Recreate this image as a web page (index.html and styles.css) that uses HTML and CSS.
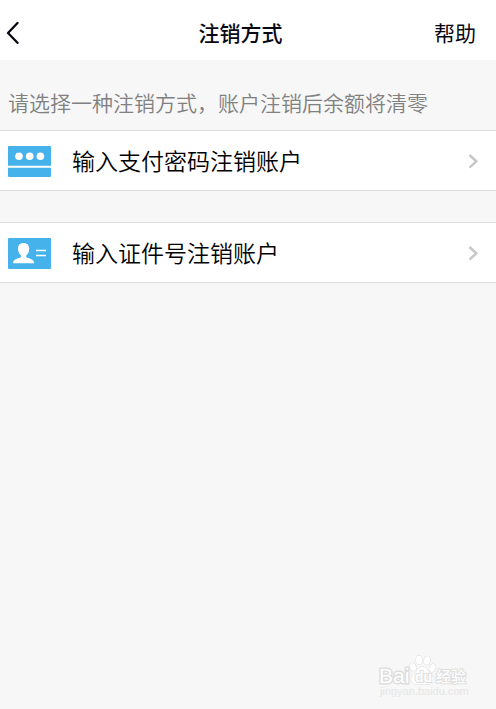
FILE: index.html
```html
<!DOCTYPE html>
<html lang="zh-CN">
<head>
<meta charset="utf-8">
<meta name="viewport" content="width=device-width, initial-scale=1">
<title>注销方式</title>
<link rel="stylesheet" href="styles.css">
</head>
<body>
<header class="bar">
  <button class="back" type="button" aria-label="返回">
    <svg width="14" height="24" viewBox="0 0 14 24"><path d="M12.500 3 3 13 12.500 22.800" fill="none" stroke="currentColor" stroke-width="2.300" stroke-linecap="round" stroke-linejoin="round"/></svg>
  </button>
  <h1 class="title">注销方式</h1>
  <a class="help" href="#help">帮助</a>
</header>
<main class="content">
  <p class="hint">请选择一种注销方式，账户注销后余额将清零</p>
  <nav class="options">
    <a class="option" href="#password">
      <svg class="icon" width="43" height="31" viewBox="0 0 43 31">
        <path d="M1 0H42Q43 0 43 1V19.700H0V1Q0 0 1 0ZM0 21.700H43V30Q43 31 42 31H1Q0 31 0 30Z" fill="#46b2eb"/>
        <g fill="#fff"><circle cx="11" cy="10.300" r="3.800"/><circle cx="21.700" cy="10.300" r="3.800"/><circle cx="32.400" cy="10.300" r="3.800"/></g>
      </svg>
      <span class="label">输入支付密码注销账户</span>
      <svg class="arrow" width="12" height="16" viewBox="0 0 12 16"><path d="M1.500 1 8.300 7.300 1.500 13.600" fill="none" stroke="currentColor" stroke-width="2.500"/></svg>
    </a>
    <a class="option" href="#identity">
      <svg class="icon" width="43" height="31" viewBox="0 0 43 31">
        <rect width="43" height="31" rx="1" fill="#46b2eb"/>
        <path d="M15.500 5C11.800 5 10 7.400 10 10.500C10 13.800 11.300 16 13 17.500V19C11.500 20.400 5 20.600 5 25.300H26.200C26.200 20.600 19.700 20.400 18.200 19V17.500C20 16 21.200 13.800 21.200 10.500C21.200 7.400 19.300 5 15.500 5Z" fill="#fff"/>
        <path d="M28 12.500H38M28 17.500H38" stroke="#fff" stroke-width="1.300"/>
      </svg>
      <span class="label">输入证件号注销账户</span>
      <svg class="arrow" width="12" height="16" viewBox="0 0 12 16"><path d="M1.500 1 8.300 7.300 1.500 13.600" fill="none" stroke="currentColor" stroke-width="2.500"/></svg>
    </a>
  </nav>
</main>
<footer class="footer">
  <svg class="mark" width="92" height="46" viewBox="0 0 92 46" role="img" aria-label="Baidu 经验">
    <g class="outline">
      <text class="latin" x="0" y="28">Bai</text>
      <ellipse cx="34" cy="12" rx="3" ry="4" transform="rotate(-20 34 12)"/>
      <ellipse cx="40" cy="5" rx="3" ry="4.300"/>
      <ellipse cx="48" cy="5.500" rx="3" ry="4.300" transform="rotate(12 48 5.500)"/>
      <ellipse cx="53.500" cy="13" rx="3" ry="4" transform="rotate(20 53.500 13)"/>
      <path d="M43.500 12C39 12 38 17 35 19C31 22 31.500 29 37 29H50C56 29 56 22 52 19C49 17 48 12 43.500 12Z"/>
      <text class="du" x="36" y="27">du</text>
      <text class="cjk" x="57" y="27">经验</text>
      <text class="url" x="1" y="40">jingyan.baidu.com</text>
    </g>
  </svg>
</footer>
</body>
</html>
```

FILE: styles.css
```css
* { box-sizing: border-box; }

body {
  margin: 0;
  min-height: 100vh;
  display: flex;
  flex-direction: column;
  background: #f7f7f7;
  color: #000;
  font-family: "Noto Sans CJK SC", sans-serif;
}

.bar {
  display: grid;
  grid-template-columns: 1fr auto 1fr;
  align-items: center;
  height: 60px;
  padding: 4px 20px 0 5px;
  background: #fff;
  color: #080815;
}

.back {
  display: flex;
  justify-self: start;
  padding: 0;
  border: 0;
  background: none;
  color: inherit;
}

.title,
.help,
.hint {
  margin: 0;
  font-size: 21px;
  line-height: 30px;
  font-weight: 400;
}

.title { font-weight: 500; }

.help {
  justify-self: end;
  color: inherit;
  text-decoration: none;
}

.content { flex: 1; }

.hint {
  padding: 27px 8px 13px;
  color: #808080;
  font-weight: 350;
}

.options {
  display: flex;
  flex-direction: column;
  gap: 31px;
}

.option {
  display: flex;
  align-items: center;
  height: 61px;
  padding: 2px 16px 0 8px;
  border: solid #dcdcdc;
  border-width: 1px 0;
  background: #fff;
  color: #000;
  text-decoration: none;
}

.icon { flex: none; }

.label {
  flex: 1;
  padding: 0 0 4px 21px;
  font-size: 23px;
  line-height: 34px;
  font-weight: 350;
}

.arrow {
  flex: none;
  color: #c7c7c7;
}

.footer {
  display: flex;
  justify-content: flex-end;
  padding: 0 25px 8px 0;
}

.outline {
  fill: #fff;
  stroke: #dedede;
  stroke-width: 1px;
  paint-order: stroke;
}

.latin,
.du,
.url { font-family: "Liberation Sans", sans-serif; }

.latin {
  font-size: 21px;
  font-weight: 400;
  stroke-width: 3px;
}

.du {
  font-size: 14px;
  font-weight: 700;
  stroke-width: 2px;
}

.cjk {
  font-size: 15px;
  font-weight: 500;
  stroke-width: 2px;
}

.url {
  font-size: 11px;
  fill: #e6e6e6;
  stroke: none;
}
```
